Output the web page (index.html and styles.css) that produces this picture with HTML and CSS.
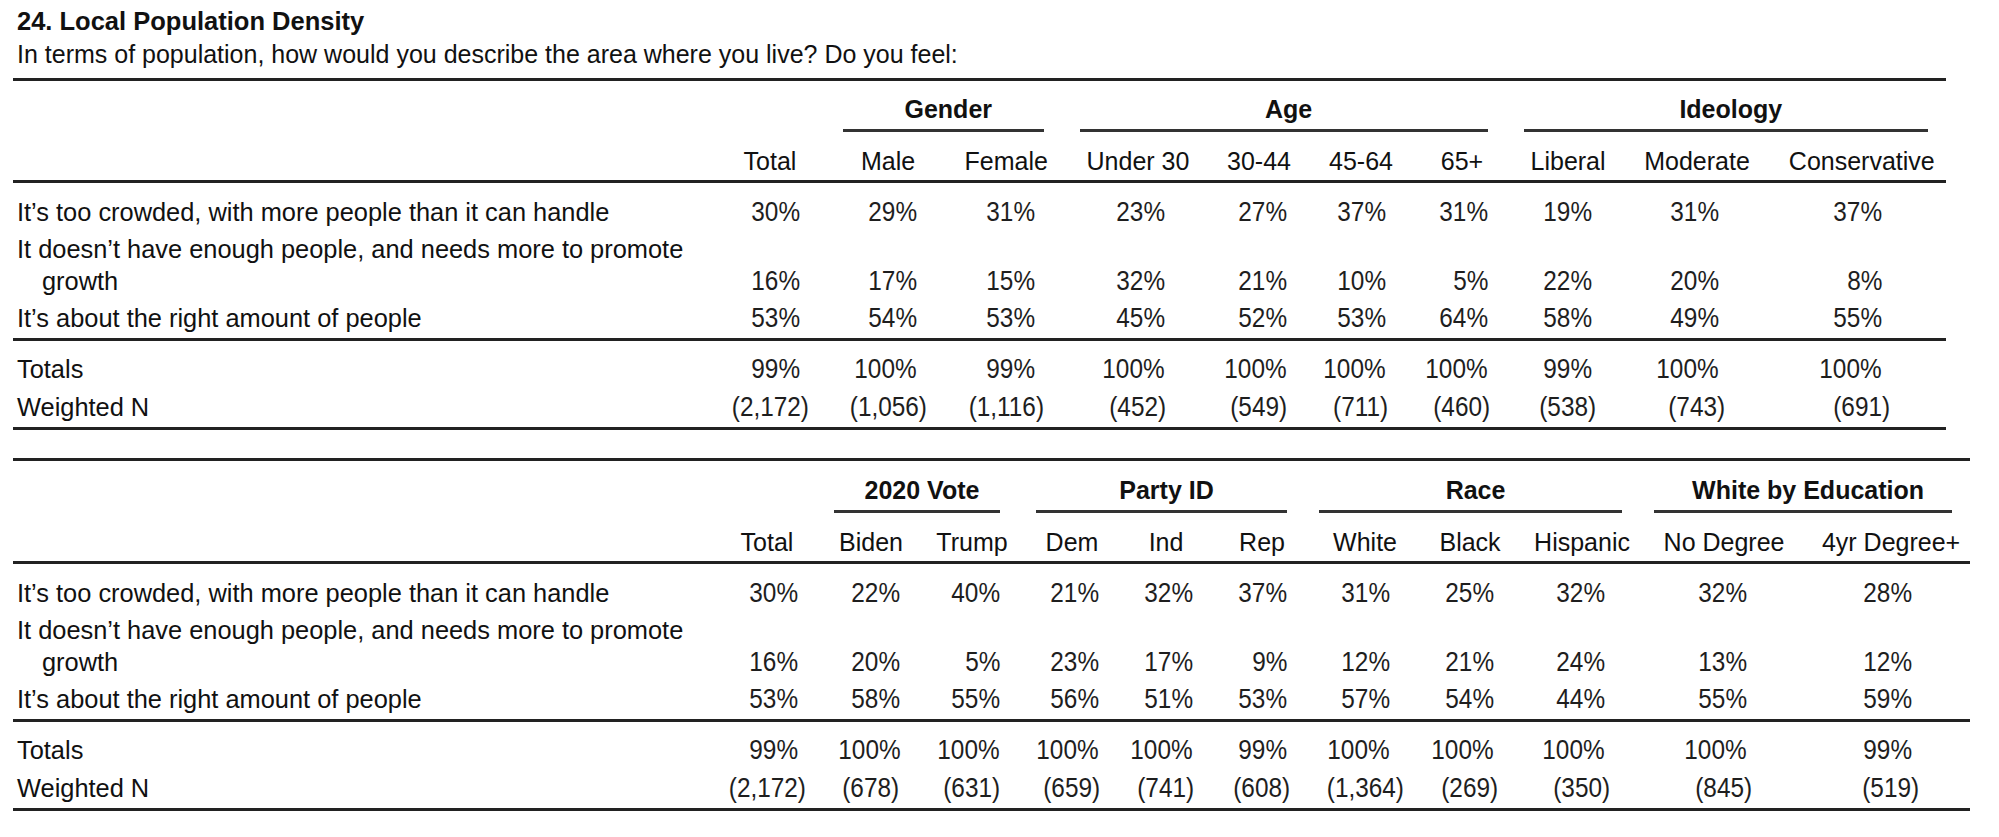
FILE: index.html
```html
<!DOCTYPE html>
<html lang="en">
<head>
<meta charset="utf-8">
<title>24. Local Population Density</title>
<link rel="stylesheet" href="styles.css">
</head>
<body>
<div class="page">
  <h1 class="title">24. Local Population Density</h1>
  <p class="subtitle">In terms of population, how would you describe the area where you live? Do you feel:</p>

  <table class="xt xt-1">
    <colgroup>
      <col class="w702"><col class="w110"><col class="w126"><col class="w110h"><col class="w153"><col class="w89"><col class="w115"><col class="w87"><col class="w125"><col class="w133"><col class="w182h">
    </colgroup>
    <thead>
      <tr class="groups">
        <th></th><th></th>
        <th colspan="2" class="grp"><div class="rule">Gender</div></th>
        <th colspan="4" class="grp"><div class="rule">Age</div></th>
        <th colspan="3" class="grp"><div class="rule">Ideology</div></th>
      </tr>
      <tr class="cols">
        <th></th><th>Total</th><th>Male</th><th>Female</th><th>Under 30</th><th>30-44</th><th>45-64</th><th>65+</th><th>Liberal</th><th>Moderate</th><th>Conservative</th>
      </tr>
    </thead>
    <tbody class="main">
      <tr>
        <td class="label">It’s too crowded, with more people than it can handle</td>
        <td class="n"><span class="v">30%</span></td><td class="n"><span class="v">29%</span></td><td class="n"><span class="v">31%</span></td><td class="n"><span class="v">23%</span></td><td class="n"><span class="v">27%</span></td><td class="n"><span class="v">37%</span></td><td class="n"><span class="v">31%</span></td><td class="n"><span class="v">19%</span></td><td class="n"><span class="v">31%</span></td><td class="n"><span class="v">37%</span></td>
      </tr>
      <tr>
        <td class="label">It doesn’t have enough people, and needs more to promote growth</td>
        <td class="n"><span class="v">16%</span></td><td class="n"><span class="v">17%</span></td><td class="n"><span class="v">15%</span></td><td class="n"><span class="v">32%</span></td><td class="n"><span class="v">21%</span></td><td class="n"><span class="v">10%</span></td><td class="n"><span class="v">5%</span></td><td class="n"><span class="v">22%</span></td><td class="n"><span class="v">20%</span></td><td class="n"><span class="v">8%</span></td>
      </tr>
      <tr>
        <td class="label">It’s about the right amount of people</td>
        <td class="n"><span class="v">53%</span></td><td class="n"><span class="v">54%</span></td><td class="n"><span class="v">53%</span></td><td class="n"><span class="v">45%</span></td><td class="n"><span class="v">52%</span></td><td class="n"><span class="v">53%</span></td><td class="n"><span class="v">64%</span></td><td class="n"><span class="v">58%</span></td><td class="n"><span class="v">49%</span></td><td class="n"><span class="v">55%</span></td>
      </tr>
    </tbody>
    <tbody class="sums">
      <tr>
        <td class="label">Totals</td>
        <td class="n"><span class="v">99%</span></td><td class="n"><span class="v">100%</span></td><td class="n"><span class="v">99%</span></td><td class="n"><span class="v">100%</span></td><td class="n"><span class="v">100%</span></td><td class="n"><span class="v">100%</span></td><td class="n"><span class="v">100%</span></td><td class="n"><span class="v">99%</span></td><td class="n"><span class="v">100%</span></td><td class="n"><span class="v">100%</span></td>
      </tr>
      <tr class="wn">
        <td class="label">Weighted N</td>
        <td class="n"><span class="v">(2,172)</span></td><td class="n"><span class="v">(1,056)</span></td><td class="n"><span class="v">(1,116)</span></td><td class="n"><span class="v">(452)</span></td><td class="n"><span class="v">(549)</span></td><td class="n"><span class="v">(711)</span></td><td class="n"><span class="v">(460)</span></td><td class="n"><span class="v">(538)</span></td><td class="n"><span class="v">(743)</span></td><td class="n"><span class="v">(691)</span></td>
      </tr>
    </tbody>
  </table>

  <table class="xt xt-2">
    <colgroup>
      <col class="w705"><col class="w98"><col class="w110"><col class="w92"><col class="w108"><col class="w80"><col class="w112"><col class="w94"><col class="w116"><col class="w108"><col class="w176"><col class="w158">
    </colgroup>
    <thead>
      <tr class="groups">
        <th></th><th></th>
        <th colspan="2" class="grp"><div class="rule">2020 Vote</div></th>
        <th colspan="3" class="grp"><div class="rule rule-party">Party ID</div></th>
        <th colspan="3" class="grp"><div class="rule rule-race">Race</div></th>
        <th colspan="2" class="grp"><div class="rule">White by Education</div></th>
      </tr>
      <tr class="cols">
        <th></th><th>Total</th><th>Biden</th><th>Trump</th><th>Dem</th><th>Ind</th><th>Rep</th><th>White</th><th>Black</th><th>Hispanic</th><th>No Degree</th><th>4yr Degree+</th>
      </tr>
    </thead>
    <tbody class="main">
      <tr>
        <td class="label">It’s too crowded, with more people than it can handle</td>
        <td class="n"><span class="v">30%</span></td><td class="n"><span class="v">22%</span></td><td class="n"><span class="v">40%</span></td><td class="n"><span class="v">21%</span></td><td class="n"><span class="v">32%</span></td><td class="n"><span class="v">37%</span></td><td class="n"><span class="v">31%</span></td><td class="n"><span class="v">25%</span></td><td class="n"><span class="v">32%</span></td><td class="n"><span class="v">32%</span></td><td class="n"><span class="v">28%</span></td>
      </tr>
      <tr>
        <td class="label">It doesn’t have enough people, and needs more to promote growth</td>
        <td class="n"><span class="v">16%</span></td><td class="n"><span class="v">20%</span></td><td class="n"><span class="v">5%</span></td><td class="n"><span class="v">23%</span></td><td class="n"><span class="v">17%</span></td><td class="n"><span class="v">9%</span></td><td class="n"><span class="v">12%</span></td><td class="n"><span class="v">21%</span></td><td class="n"><span class="v">24%</span></td><td class="n"><span class="v">13%</span></td><td class="n"><span class="v">12%</span></td>
      </tr>
      <tr>
        <td class="label">It’s about the right amount of people</td>
        <td class="n"><span class="v">53%</span></td><td class="n"><span class="v">58%</span></td><td class="n"><span class="v">55%</span></td><td class="n"><span class="v">56%</span></td><td class="n"><span class="v">51%</span></td><td class="n"><span class="v">53%</span></td><td class="n"><span class="v">57%</span></td><td class="n"><span class="v">54%</span></td><td class="n"><span class="v">44%</span></td><td class="n"><span class="v">55%</span></td><td class="n"><span class="v">59%</span></td>
      </tr>
    </tbody>
    <tbody class="sums">
      <tr>
        <td class="label">Totals</td>
        <td class="n"><span class="v">99%</span></td><td class="n"><span class="v">100%</span></td><td class="n"><span class="v">100%</span></td><td class="n"><span class="v">100%</span></td><td class="n"><span class="v">100%</span></td><td class="n"><span class="v">99%</span></td><td class="n"><span class="v">100%</span></td><td class="n"><span class="v">100%</span></td><td class="n"><span class="v">100%</span></td><td class="n"><span class="v">100%</span></td><td class="n"><span class="v">99%</span></td>
      </tr>
      <tr class="wn">
        <td class="label">Weighted N</td>
        <td class="n"><span class="v">(2,172)</span></td><td class="n"><span class="v">(678)</span></td><td class="n"><span class="v">(631)</span></td><td class="n"><span class="v">(659)</span></td><td class="n"><span class="v">(741)</span></td><td class="n"><span class="v">(608)</span></td><td class="n"><span class="v">(1,364)</span></td><td class="n"><span class="v">(269)</span></td><td class="n"><span class="v">(350)</span></td><td class="n"><span class="v">(845)</span></td><td class="n"><span class="v">(519)</span></td>
      </tr>
    </tbody>
  </table>
</div>
</body>
</html>
```

FILE: styles.css
```css
html, body {
  margin: 0;
  padding: 0;
  background: #ffffff;
}

body {
  color: #111111;
  font-family: "Liberation Sans", Arial, Helvetica, sans-serif;
}

.page {
  padding-top: 5.3px;
}

.title {
  margin: 0 0 0 17px;
  font-size: 25.5px;
  font-weight: bold;
  line-height: 33px;
}

.subtitle {
  margin: 0 0 0 17px;
  font-size: 25px;
  line-height: 32px;
}

/* crosstab tables */
.xt {
  margin-left: 13px;
  table-layout: fixed;
  border-collapse: separate;
  border-spacing: 0;
  border-top: 3px solid #222222;
  border-bottom: 3px solid #222222;
  font-size: 25px;
  line-height: 32px;
}

.xt-1 {
  width: 1933px;
  margin-top: 7.7px;
}

.xt-2 {
  width: 1957px;
  margin-top: 28px;
}

/* column widths */
.w702 { width: 702px; }
.w705 { width: 705px; }
.w110 { width: 110px; }
.w110h { width: 110.5px; }
.w126 { width: 126px; }
.w153 { width: 153px; }
.w89 { width: 89px; }
.w115 { width: 115px; }
.w87 { width: 87px; }
.w125 { width: 125px; }
.w133 { width: 133px; }
.w182h { width: 182.5px; }
.w98 { width: 98px; }
.w92 { width: 92px; }
.w108 { width: 108px; }
.w80 { width: 80px; }
.w112 { width: 112px; }
.w94 { width: 94px; }
.w116 { width: 116px; }
.w176 { width: 176px; }
.w158 { width: 158px; }

.xt th {
  padding: 0;
  font-weight: normal;
  text-align: center;
  vertical-align: bottom;
  white-space: nowrap;
}

.groups th {
  padding-top: 12.3px;
}

.groups .grp {
  font-weight: bold;
}

.rule {
  margin: 0 18px;
  padding-left: 10px;
  padding-bottom: 4.2px;
  border-bottom: 3px solid #333333;
}

.rule-party {
  margin-right: 31px;
}

.rule-race {
  margin-left: 1px;
  margin-right: 14px;
}

.cols th {
  padding-top: 12.8px;
  padding-bottom: 3.2px;
  border-bottom: 3px solid #222222;
}

.xt-1 .cols th:nth-child(11) {
  padding-left: 14px;
}

.xt td {
  padding: 2px 0 3px;
  vertical-align: bottom;
}

.main tr:first-child td {
  padding-top: 12.8px;
}

.main tr:last-child td {
  padding-bottom: 4.2px;
}

.sums td {
  padding-top: 3px;
  padding-bottom: 3px;
}

.sums tr:first-child td {
  border-top: 3px solid #222222;
  padding-top: 11.8px;
}

.sums tr:last-child td {
  padding-bottom: 4.2px;
}

.xt td.label {
  padding-left: 29px;
  padding-right: 6px;
  text-indent: -25px;
  text-align: left;
  font-size: 25.4px;
}

/* numeric cells: right-aligned, each column with its own inset */
.xt td.n {
  text-align: right;
  white-space: nowrap;
  font-size: 28px;
  color: #1e1e1e;
}

.xt-1 td.n:nth-child(2)  { padding-right: 25px; }
.xt-1 td.n:nth-child(3)  { padding-right: 34px; }
.xt-1 td.n:nth-child(4)  { padding-right: 26.5px; }
.xt-1 td.n:nth-child(5)  { padding-right: 49.5px; }
.xt-1 td.n:nth-child(6)  { padding-right: 16.5px; }
.xt-1 td.n:nth-child(7)  { padding-right: 32.5px; }
.xt-1 td.n:nth-child(8)  { padding-right: 17.5px; }
.xt-1 td.n:nth-child(9)  { padding-right: 38.5px; }
.xt-1 td.n:nth-child(10) { padding-right: 44.5px; }
.xt-1 td.n:nth-child(11) { padding-right: 64px; }

.xt-2 td.n:nth-child(2)  { padding-right: 18px; }
.xt-2 td.n:nth-child(3)  { padding-right: 25.5px; }
.xt-2 td.n:nth-child(4)  { padding-right: 18px; }
.xt-2 td.n:nth-child(5)  { padding-right: 27px; }
.xt-2 td.n:nth-child(6)  { padding-right: 13px; }
.xt-2 td.n:nth-child(7)  { padding-right: 31px; }
.xt-2 td.n:nth-child(8)  { padding-right: 22px; }
.xt-2 td.n:nth-child(9)  { padding-right: 34px; }
.xt-2 td.n:nth-child(10) { padding-right: 31px; }
.xt-2 td.n:nth-child(11) { padding-right: 65px; }
.xt-2 td.n:nth-child(12) { padding-right: 58px; }

.v {
  display: inline-block;
  margin-left: -40px;
  transform: scaleX(0.87);
  transform-origin: right center;
}

/* weighted counts are centred under their column headings */
.xt .wn td.n {
  text-align: center;
  padding-right: 0;
}

.xt-1 .wn td.n:nth-child(11) {
  padding-left: 14px;
}

.wn .v {
  margin-left: 0;
  transform-origin: center center;
}
```
